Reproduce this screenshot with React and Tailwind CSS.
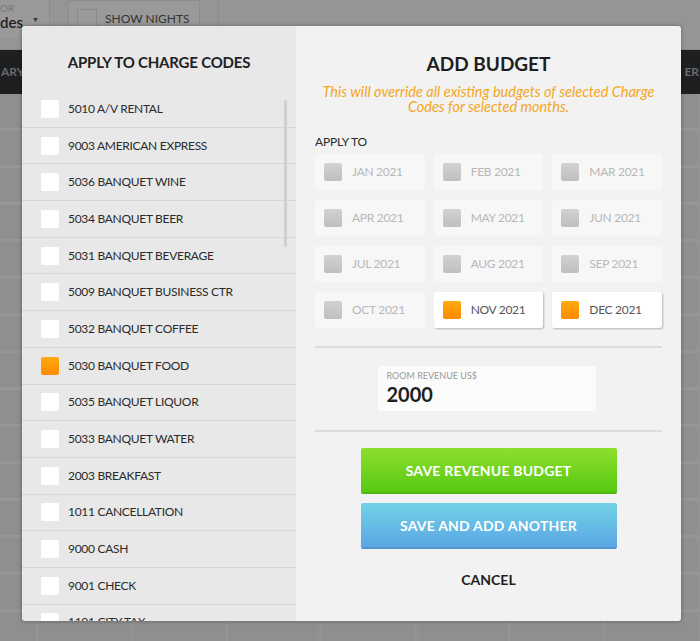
import React from "react";

const codes = [
  ["5010 A/V RENTAL", false],
  ["9003 AMERICAN EXPRESS", false],
  ["5036 BANQUET WINE", false],
  ["5034 BANQUET BEER", false],
  ["5031 BANQUET BEVERAGE", false],
  ["5009 BANQUET BUSINESS CTR", false],
  ["5032 BANQUET COFFEE", false],
  ["5030 BANQUET FOOD", true],
  ["5035 BANQUET LIQUOR", false],
  ["5033 BANQUET WATER", false],
  ["2003 BREAKFAST", false],
  ["1011 CANCELLATION", false],
  ["9000 CASH", false],
  ["9001 CHECK", false],
  ["1101 CITY TAX", false],
];

const months = [
  ["JAN 2021", false], ["FEB 2021", false], ["MAR 2021", false],
  ["APR 2021", false], ["MAY 2021", false], ["JUN 2021", false],
  ["JUL 2021", false], ["AUG 2021", false], ["SEP 2021", false],
  ["OCT 2021", false], ["NOV 2021", true], ["DEC 2021", true],
];

function OrangeBox() {
  return (
    <div className="w-[18px] h-[18px] rounded-[2px] bg-gradient-to-b from-[#ffaa10] to-[#ff8a00] shrink-0" />
  );
}

export default function App() {
  return (
    <div
      className="relative w-[700px] h-[641px] overflow-hidden bg-[#8f8f8f]"
      style={{ fontFamily: "Lato, 'Open Sans', sans-serif" }}
    >
      {/* background app (dimmed) */}
      <div className="flex flex-col">
        <div className="h-[50px] shrink-0 bg-[#959595] flex items-start gap-[18px] border-b border-[#8a8a8a]">
          <div className="w-[50px] h-[38px] bg-[#999] border-r border-[#8c8c8c] flex flex-col justify-start pt-[2px] pl-0 relative">
            <span className="text-[10px] leading-[12px] text-[#777]">OR</span>
            <span className="text-[15px] leading-[16px] font-semibold text-[#222]">des</span>
            <span className="absolute right-[10px] top-[14px] text-[7px] text-[#333]">▼</span>
          </div>
          <div className="w-[132px] h-[38px] bg-[#999] border border-[#8c8c8c] rounded-[2px] flex items-center gap-[8px] pl-[8px]">
            <div className="w-[20px] h-[20px] border border-[#8a8a8a] bg-[#9a9a9a]" />
            <span className="text-[12px] text-[#333]">SHOW NIGHTS</span>
          </div>
          <div className="flex-1 h-[38px] border-l border-[#8c8c8c]" />
        </div>
        <div className="h-[44px] shrink-0 bg-[#1e1f21] flex items-center justify-between overflow-hidden">
          <span className="text-[12px] font-bold text-[#6a6a6a] pl-[1px]">ARY</span>
          <span className="text-[12px] font-bold text-[#6a6a6a] pr-[1px]">ER</span>
        </div>
        {Array.from({ length: 15 }).map((_, i) => (
          <div key={i} className="h-[37px] shrink-0 border-b-[3px] border-[#969696] flex">
            {Array.from({ length: 8 }).map((__, j) => (
              <div key={j} className="w-[96px] h-full border-r-[3px] border-[#939393] first:w-[40px]" />
            ))}
          </div>
        ))}
      </div>

      {/* modal */}
      <div className="absolute left-[22px] top-[26px] w-[659px] h-[595px] rounded-[3px] overflow-hidden flex shadow-[0_0_4px_rgba(0,0,0,0.35)]">
        {/* left panel */}
        <div className="w-[274px] h-full bg-[#e8e8e8] flex flex-col relative">
          <div className="h-[65px] shrink-0 flex items-center justify-center pt-[8px]">
            <h2 className="text-[15px] font-bold text-[#222] tracking-[-0.2px]">APPLY TO CHARGE CODES</h2>
          </div>
          <div className="flex flex-col">
            {codes.map(([label, checked], i) => (
              <div
                key={i}
                className="h-[36.7px] shrink-0 flex items-center border-b-[1.5px] border-[#d5d5d5] pl-[19px] gap-[9px]"
              >
                {checked ? (
                  <OrangeBox />
                ) : (
                  <div className="w-[18px] h-[18px] rounded-[2px] bg-white shrink-0" />
                )}
                <span className="text-[12px] text-[#2b2b2b] tracking-[-0.3px]">{label}</span>
              </div>
            ))}
          </div>
          <div className="absolute left-[262px] top-[74px] w-[3px] h-[147px] rounded-full bg-[#cfcfcf]" />
        </div>

        {/* right panel */}
        <div className="flex-1 h-full bg-[#f2f2f2] flex flex-col px-[19px]">
          <div className="pt-[24px] flex flex-col items-center">
            <h1 className="text-[19px] leading-[28px] font-bold text-[#1e1e1e]">ADD BUDGET</h1>
            <p className="text-[14.5px] leading-[15px] italic text-[#f5a623] text-center mt-[6px]">
              This will override all existing budgets of selected Charge
              <br />
              Codes for selected months.
            </p>
          </div>
          <div className="mt-[21px] text-[12px] leading-[14px] text-[#2b2b2b] tracking-[-0.2px]">APPLY TO</div>
          <div className="mt-[5px] grid grid-cols-3 gap-x-[9px] gap-y-[10px]">
            {months.map(([m, checked], i) => (
              <div
                key={i}
                className={
                  checked
                    ? "h-[36px] bg-white rounded-[2px] flex items-center pl-[9px] gap-[10px] shadow-[1px_1px_2px_rgba(0,0,0,0.25)]"
                    : "h-[36px] bg-[#f7f7f7] rounded-[2px] flex items-center pl-[9px] gap-[10px]"
                }
              >
                {checked ? (
                  <OrangeBox />
                ) : (
                  <div className="w-[18px] h-[18px] rounded-[2px] bg-gradient-to-b from-[#d2d2d2] to-[#bfbfbf] shrink-0" />
                )}
                <span className={checked ? "text-[12px] tracking-[-0.3px] text-[#555]" : "text-[12px] tracking-[-0.3px] text-[#b8b8b8]"}>{m}</span>
              </div>
            ))}
          </div>
          <div className="mt-[18px] h-[2px] bg-[#dcdcdc]" />
          <div className="mt-[18px] flex justify-center pr-[4px]">
            <div className="w-[218px] h-[45px] bg-[#fbfbfb] rounded-[2px] pl-[9px] pt-[5px]">
              <div className="text-[9px] leading-[10px] text-[#999]">ROOM REVENUE US$</div>
              <div className="text-[20px] leading-[24px] font-bold text-[#1e1e1e] mt-[1px]">2000</div>
            </div>
          </div>
          <div className="mt-[19px] h-[2px] bg-[#dcdcdc]" />
          <div className="mt-[16px] flex flex-col items-center">
            <button className="w-[256px] h-[46px] rounded-[2px] bg-gradient-to-b from-[#8ede2c] to-[#55c912] border-b-[2px] border-[#4fb810] text-white text-[14px] font-bold tracking-[0.2px]">
              SAVE REVENUE BUDGET
            </button>
            <button className="mt-[9px] w-[256px] h-[46px] rounded-[2px] bg-gradient-to-b from-[#72d2e6] to-[#5ba6e4] border-b-[2px] border-[#5096d0] text-white text-[14px] font-bold tracking-[0.2px]">
              SAVE AND ADD ANOTHER
            </button>
            <div className="mt-[20px] text-[14px] font-bold text-[#1e1e1e]">CANCEL</div>
          </div>
        </div>
      </div>
    </div>
  );
}
